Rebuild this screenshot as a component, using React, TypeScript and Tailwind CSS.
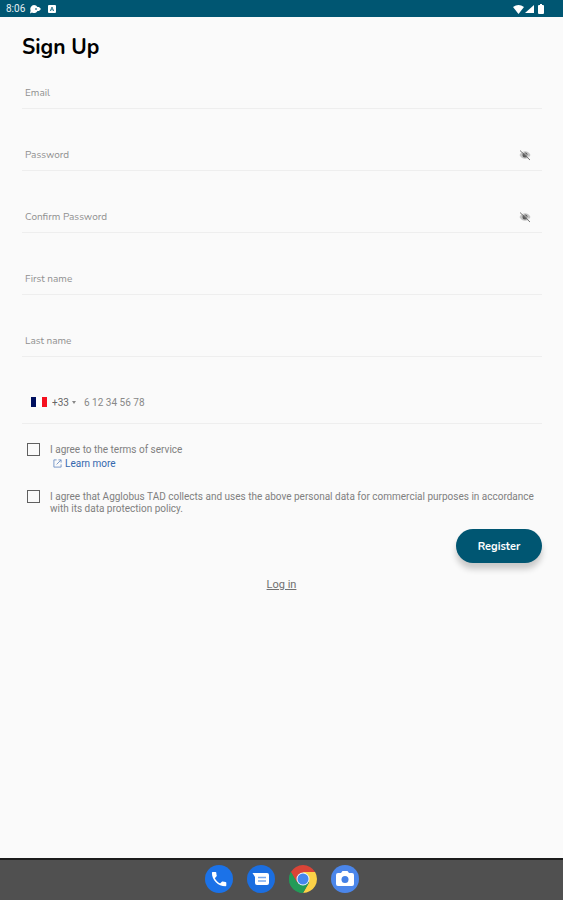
import { useState } from 'react';

type FieldProps = {
  label: string;
  type?: 'text' | 'email' | 'password';
};

function HiddenEyeIcon() {
  return (
    <svg viewBox="0 0 24 24" className="h-3 w-3" aria-hidden="true">
      <path d="M1 12C4 6.500 8 4.500 12 4.500S20 6.500 23 12C20 17.500 16 19.500 12 19.500S4 17.500 1 12Z" fill="#c4c4c4" />
      <circle cx="12" cy="12" r="5" fill="#5a5a5a" />
      <path d="M2 3 22 22" stroke="#777" strokeWidth="2" />
      <path d="M4.500 2 24 20.500" stroke="#fafafa" strokeWidth="1.500" />
    </svg>
  );
}

function Field({ label, type = 'text' }: FieldProps) {
  const [visible, setVisible] = useState(false);
  const secret = type === 'password';
  return (
    <div className="mb-[30px] flex h-8 items-center border-b border-[#eeeeee] px-[3px]">
      <input
        type={secret && visible ? 'text' : type}
        aria-label={label}
        placeholder={label}
        className="h-full min-w-0 flex-1 bg-transparent font-['Nunito','Open_Sans',sans-serif] text-[10px] text-[#444] outline-none placeholder:text-[#909090]"
      />
      {secret && (
        <button type="button" aria-label="Toggle password visibility" onClick={() => setVisible(!visible)} className="mr-2">
          <HiddenEyeIcon />
        </button>
      )}
    </div>
  );
}

function StatusBar() {
  return (
    <header className="flex h-[17px] items-center bg-[#005672] pr-[18px] pl-[6px] text-white">
      <span className="text-[10px] leading-4 text-[#e6f0f3]">8:06</span>
      <svg viewBox="0 0 12 10" className="ml-1 h-[10px] w-3" aria-hidden="true">
        <path d="M5 1a4 4 0 0 1 3.500 2H10l2 2-2 2H8.500A4 4 0 0 1 3 8.500L1 9.500l.6-3A4 4 0 0 1 5 1Z" fill="white" />
        <circle cx="7" cy="5" r="1" fill="#4c8a9e" />
      </svg>
      <svg viewBox="0 0 10 10" className="ml-[6px] h-[10px] w-[10px]" aria-hidden="true">
        <rect x="1" y="1" width="8" height="8" rx="1" fill="white" />
        <path d="m3.300 7 1.700-4 1.700 4M4 5.800h2" fill="none" stroke="#397f95" />
      </svg>
      <svg viewBox="0 0 32 10" className="ml-auto h-[10px] w-8" aria-hidden="true">
        <path d="M0 3Q5.500-1 11 3L5.500 10Z" fill="white" />
        <path d="M21 1v8h-9Z" fill="white" />
        <path d="M26 1h1V0h2v1h1q1 0 1 1v7q0 1-1 1h-4q-1 0-1-1V2q0-1 1-1Z" fill="white" />
      </svg>
    </header>
  );
}

function FrenchFlag() {
  return (
    <svg viewBox="0 0 16 10" className="h-[10px] w-4" aria-hidden="true">
      <rect width="16" height="10" fill="white" />
      <rect width="5" height="10" fill="#00105f" />
      <rect x="11" width="5" height="10" fill="#f5101f" />
    </svg>
  );
}

function PhoneField() {
  return (
    <div className="flex h-[37px] items-start border-b border-[#eeeeee] pt-2 pl-[9px] text-[10px] text-[#777]">
      <div className="flex h-[14px] items-center">
        <FrenchFlag />
        <select aria-label="Country code" className="ml-[5px] w-[18px] appearance-none bg-transparent text-[#666] outline-none">
          <option>+33</option>
        </select>
        <svg viewBox="0 0 4 3" className="ml-[2px] h-[3px] w-1" aria-hidden="true">
          <path d="M0 0h4L2 3Z" fill="#888" />
        </svg>
      </div>
      <input
        type="tel"
        aria-label="Phone number"
        placeholder="6 12 34 56 78"
        className="ml-2 h-[14px] min-w-0 flex-1 bg-transparent outline-none placeholder:text-[#888]"
      />
    </div>
  );
}

const checkboxClass =
  'h-[13px] w-[13px] shrink-0 appearance-none border border-[#606060] bg-transparent checked:bg-[#005672]';

function Consents() {
  return (
    <div className="pl-[5px] text-[10px] leading-3 text-[#808080]">
      <div className="mt-[19px] flex gap-[10px]">
        <input id="terms" type="checkbox" className={checkboxClass} />
        <div>
          <label htmlFor="terms" className="block leading-[14px]">
            I agree to the terms of service
          </label>
          <a href="#terms" className="ml-[3px] flex items-center gap-[3px] leading-[13px] text-[#3468ae]">
            <svg viewBox="0 0 10 10" className="h-[9px] w-[9px]" fill="none" stroke="#6f91c4" aria-hidden="true">
              <path d="M4 1H1v8h8V6M6 1h3v3M9 1 4 6" />
            </svg>
            Learn more
          </a>
        </div>
      </div>
      <div className="mt-5 flex gap-[10px]">
        <input id="data" type="checkbox" className={checkboxClass} />
        <label htmlFor="data" className="mt-[1px]">
          I agree that Agglobus TAD collects and uses the above personal data for commercial purposes in accordance with its
          data protection policy.
        </label>
      </div>
    </div>
  );
}

function Dock() {
  const app = 'h-7 w-7';
  return (
    <nav
      aria-label="Apps"
      className="flex h-[42px] items-center justify-center gap-[14px] border-t-2 border-[#1c1c1c] bg-[#505050] pb-[2px]"
    >
      <button type="button" aria-label="Phone">
        <svg viewBox="0 0 28 28" className={app}>
          <circle cx="14" cy="14" r="14" fill="#1b72e8" />
          <path
            transform="translate(4.500 4.500) scale(.8)"
            fill="white"
            d="M6.620 10.790c1.440 2.830 3.760 5.140 6.590 6.590l2.200-2.200c.27-.27.67-.36 1.020-.24 1.120.37 2.330.57 3.570.57.55 0 1 .45 1 1V20c0 .55-.45 1-1 1C10.600 21 3 13.400 3 4c0-.55.45-1 1-1h3.500c.55 0 1 .45 1 1 0 1.250.2 2.450.57 3.570.11.35.03.74-.25 1.020l-2.200 2.200z"
          />
        </svg>
      </button>
      <button type="button" aria-label="Messages">
        <svg viewBox="0 0 28 28" className={app}>
          <circle cx="14" cy="14" r="14" fill="#1b6ee0" />
          <path d="M5.500 8H20q2 0 2 2v8q0 2-2 2H10q-2 0-2-2v-6Z" fill="white" />
          <path d="M11 12.500h8M11 16h8" stroke="#78a9ee" strokeWidth="1.500" />
        </svg>
      </button>
      <button type="button" aria-label="Chrome">
        <svg viewBox="0 0 28 28" className={app}>
          <path d="M14 14 1.900 7A14 14 0 0 1 26.100 7Z" fill="#da4437" />
          <path d="M14 7H26.100A14 14 0 0 1 14 28L20 17.500Z" fill="#fdd247" />
          <path d="M1.900 7A14 14 0 0 0 14 28L20 17.500 14 14 8 17.500Z" fill="#239b58" />
          <path d="M1.900 7 8 17.500 14 14V7Z" fill="#da4437" />
          <path d="M1.900 7 8 17.500 14 21 14 28A14 14 0 0 1 1.900 7Z" fill="#239b58" />
          <circle cx="14" cy="14" r="6.500" fill="#f1f5fa" />
          <circle cx="14" cy="14" r="5.500" fill="#4687ee" />
        </svg>
      </button>
      <button type="button" aria-label="Camera">
        <svg viewBox="0 0 28 28" className={app}>
          <circle cx="14" cy="14" r="14" fill="#4b86ea" />
          <path d="M7 8h3l1.500-2h5L18 8h3q2 0 2 2v9q0 2-2 2H7q-2 0-2-2v-9q0-2 2-2Z" fill="white" />
          <circle cx="14" cy="14.500" r="3.500" fill="#4380e6" />
        </svg>
      </button>
    </nav>
  );
}

export default function App() {
  return (
    <div className="flex min-h-screen flex-col bg-[#fafafa] font-['Roboto',sans-serif]">
      <StatusBar />
      <main className="flex-1 px-[21px] pt-4">
        <h1 className="mb-4 pt-[1px] pl-[1px] font-['Nunito','Open_Sans',sans-serif] text-[21px] leading-[27px] font-bold text-black">
          Sign Up
        </h1>
        <form onSubmit={(event) => event.preventDefault()} className="pl-[1px]">
          <Field label="Email" type="email" />
          <Field label="Password" type="password" />
          <Field label="Confirm Password" type="password" />
          <Field label="First name" />
          <Field label="Last name" />
          <PhoneField />
          <Consents />
          <div className="mt-[14px] flex justify-end">
            <button
              type="submit"
              className="h-[34px] w-[86px] rounded-full bg-[#005672] pt-[2px] font-['Nunito','Open_Sans',sans-serif] text-[11px] font-bold text-white shadow-[0_6px_6px_rgba(0,0,0,0.2)]"
            >
              Register
            </button>
          </div>
        </form>
        <div className="mt-[14px] flex justify-center">
          <a href="#login" className="text-[11px] leading-4 text-[#707070] underline">
            Log in
          </a>
        </div>
      </main>
      <Dock />
    </div>
  );
}
